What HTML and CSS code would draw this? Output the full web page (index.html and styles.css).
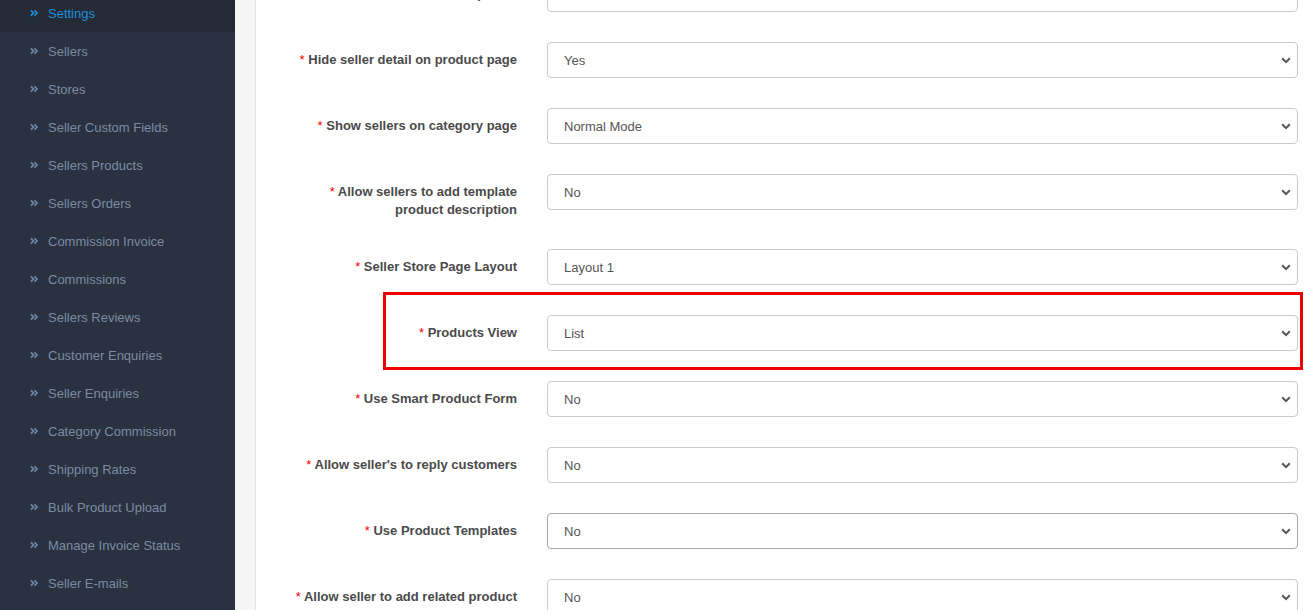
FILE: index.html
```html
<!DOCTYPE html>
<html lang="en">
<head>
<meta charset="utf-8">
<title>Settings</title>
<link rel="stylesheet" href="styles.css">
</head>
<body>
<div class="page">
  <nav class="sidebar">
    <ul class="menu">
      <li class="item active"><svg class="dbl" viewBox="0 0 9 8"><path d="M1 1l3 3-3 3M5 1l3 3-3 3"/></svg><span>Settings</span></li>
      <li class="item"><svg class="dbl" viewBox="0 0 9 8"><path d="M1 1l3 3-3 3M5 1l3 3-3 3"/></svg><span>Sellers</span></li>
      <li class="item"><svg class="dbl" viewBox="0 0 9 8"><path d="M1 1l3 3-3 3M5 1l3 3-3 3"/></svg><span>Stores</span></li>
      <li class="item"><svg class="dbl" viewBox="0 0 9 8"><path d="M1 1l3 3-3 3M5 1l3 3-3 3"/></svg><span>Seller Custom Fields</span></li>
      <li class="item"><svg class="dbl" viewBox="0 0 9 8"><path d="M1 1l3 3-3 3M5 1l3 3-3 3"/></svg><span>Sellers Products</span></li>
      <li class="item"><svg class="dbl" viewBox="0 0 9 8"><path d="M1 1l3 3-3 3M5 1l3 3-3 3"/></svg><span>Sellers Orders</span></li>
      <li class="item"><svg class="dbl" viewBox="0 0 9 8"><path d="M1 1l3 3-3 3M5 1l3 3-3 3"/></svg><span>Commission Invoice</span></li>
      <li class="item"><svg class="dbl" viewBox="0 0 9 8"><path d="M1 1l3 3-3 3M5 1l3 3-3 3"/></svg><span>Commissions</span></li>
      <li class="item"><svg class="dbl" viewBox="0 0 9 8"><path d="M1 1l3 3-3 3M5 1l3 3-3 3"/></svg><span>Sellers Reviews</span></li>
      <li class="item"><svg class="dbl" viewBox="0 0 9 8"><path d="M1 1l3 3-3 3M5 1l3 3-3 3"/></svg><span>Customer Enquiries</span></li>
      <li class="item"><svg class="dbl" viewBox="0 0 9 8"><path d="M1 1l3 3-3 3M5 1l3 3-3 3"/></svg><span>Seller Enquiries</span></li>
      <li class="item"><svg class="dbl" viewBox="0 0 9 8"><path d="M1 1l3 3-3 3M5 1l3 3-3 3"/></svg><span>Category Commission</span></li>
      <li class="item"><svg class="dbl" viewBox="0 0 9 8"><path d="M1 1l3 3-3 3M5 1l3 3-3 3"/></svg><span>Shipping Rates</span></li>
      <li class="item"><svg class="dbl" viewBox="0 0 9 8"><path d="M1 1l3 3-3 3M5 1l3 3-3 3"/></svg><span>Bulk Product Upload</span></li>
      <li class="item"><svg class="dbl" viewBox="0 0 9 8"><path d="M1 1l3 3-3 3M5 1l3 3-3 3"/></svg><span>Manage Invoice Status</span></li>
      <li class="item"><svg class="dbl" viewBox="0 0 9 8"><path d="M1 1l3 3-3 3M5 1l3 3-3 3"/></svg><span>Seller E-mails</span></li>
    </ul>
  </nav>
  <div class="gutter"></div>
  <main class="main">
    <div class="form">
      <div class="row">
        <label class="lbl"><span class="req">*</span> Show seller profile</label>
        <div class="select"><span>Yes</span><svg class="chev" viewBox="0 0 10 7"><path d="M1.2 1.3l3.8 3.8 3.8-3.8"/></svg></div>
      </div>
      <div class="row">
        <label class="lbl"><span class="req">*</span> Hide seller detail on product page</label>
        <div class="select"><span>Yes</span><svg class="chev" viewBox="0 0 10 7"><path d="M1.2 1.3l3.8 3.8 3.8-3.8"/></svg></div>
      </div>
      <div class="row">
        <label class="lbl"><span class="req">*</span> Show sellers on category page</label>
        <div class="select"><span>Normal Mode</span><svg class="chev" viewBox="0 0 10 7"><path d="M1.2 1.3l3.8 3.8 3.8-3.8"/></svg></div>
      </div>
      <div class="row">
        <label class="lbl"><span class="req">*</span> Allow sellers to add template product description</label>
        <div class="select"><span>No</span><svg class="chev" viewBox="0 0 10 7"><path d="M1.2 1.3l3.8 3.8 3.8-3.8"/></svg></div>
      </div>
      <div class="row">
        <label class="lbl"><span class="req">*</span> Seller Store Page Layout</label>
        <div class="select"><span>Layout 1</span><svg class="chev" viewBox="0 0 10 7"><path d="M1.2 1.3l3.8 3.8 3.8-3.8"/></svg></div>
      </div>
      <div class="row">
        <label class="lbl"><span class="req">*</span> Products View</label>
        <div class="select"><span>List</span><svg class="chev" viewBox="0 0 10 7"><path d="M1.2 1.3l3.8 3.8 3.8-3.8"/></svg></div>
        <div class="mark"></div>
      </div>
      <div class="row">
        <label class="lbl"><span class="req">*</span> Use Smart Product Form</label>
        <div class="select"><span>No</span><svg class="chev" viewBox="0 0 10 7"><path d="M1.2 1.3l3.8 3.8 3.8-3.8"/></svg></div>
      </div>
      <div class="row">
        <label class="lbl"><span class="req">*</span> Allow seller's to reply customers</label>
        <div class="select"><span>No</span><svg class="chev" viewBox="0 0 10 7"><path d="M1.2 1.3l3.8 3.8 3.8-3.8"/></svg></div>
      </div>
      <div class="row">
        <label class="lbl"><span class="req">*</span> Use Product Templates</label>
        <div class="select hover"><span>No</span><svg class="chev" viewBox="0 0 10 7"><path d="M1.2 1.3l3.8 3.8 3.8-3.8"/></svg></div>
      </div>
      <div class="row">
        <label class="lbl"><span class="req">*</span> Allow seller to add related product</label>
        <div class="select"><span>No</span><svg class="chev" viewBox="0 0 10 7"><path d="M1.2 1.3l3.8 3.8 3.8-3.8"/></svg></div>
      </div>
    </div>
  </main>
</div>
</body>
</html>
```

FILE: styles.css
```css
* { box-sizing: border-box; }
html, body {
  margin: 0;
  padding: 0;
  height: 100%;
  overflow: hidden;
  background: #ffffff;
  font-family: "Liberation Sans", Arial, sans-serif;
  font-size: 13px;
}
.page {
  display: flex;
  height: 610px;
}
.sidebar {
  width: 235px;
  flex: 0 0 235px;
  background: #2a3140;
  overflow: hidden;
}
.menu {
  list-style: none;
  margin: -6px 0 0 0;
  padding: 0;
}
.item {
  height: 38px;
  display: flex;
  align-items: center;
  padding-left: 30px;
  color: #7b8ca2;
  font-size: 13px;
}
.item.active {
  background: #242a36;
  color: #1f8fd8;
}
.dbl {
  width: 8px;
  height: 8px;
  margin-right: 10px;
  fill: none;
  stroke: currentColor;
  stroke-width: 1.8;
}
.item .dbl { color: #6f88a6; }
.item.active .dbl { color: #1f8fd8; }
.gutter {
  width: 21px;
  flex: 0 0 21px;
  background: #f5f5f5;
  border-right: 1px solid #e4e4e4;
}
.main {
  flex: 1;
  background: #ffffff;
  padding-right: 11px;
}
.form {
  display: flex;
  flex-direction: column;
  gap: 30px;
  margin-top: -24px;
}
.row {
  display: grid;
  grid-template-columns: 261px 1fr;
  column-gap: 30px;
  align-items: start;
  position: relative;
}
.lbl {
  padding: 9px 0 0 30px;
  line-height: 18px;
  text-align: right;
  font-weight: bold;
  color: #4a4a4a;
  font-size: 13px;
}
.req { color: #ff0000; font-weight: normal; }
.select {
  height: 36px;
  border: 1px solid #cccccc;
  border-radius: 4px;
  display: flex;
  align-items: center;
  justify-content: space-between;
  padding: 0 6px 0 16px;
  color: #555555;
  font-size: 13px;
}
.select.hover { border-color: #a8a8a8; }
.chev {
  width: 10px;
  height: 7px;
  fill: none;
  stroke: #555555;
  stroke-width: 2;
}
.mark {
  position: absolute;
  left: 127px;
  top: -23px;
  right: -5px;
  bottom: -19px;
  border: 3px solid #ee0000;
  pointer-events: none;
}
```
